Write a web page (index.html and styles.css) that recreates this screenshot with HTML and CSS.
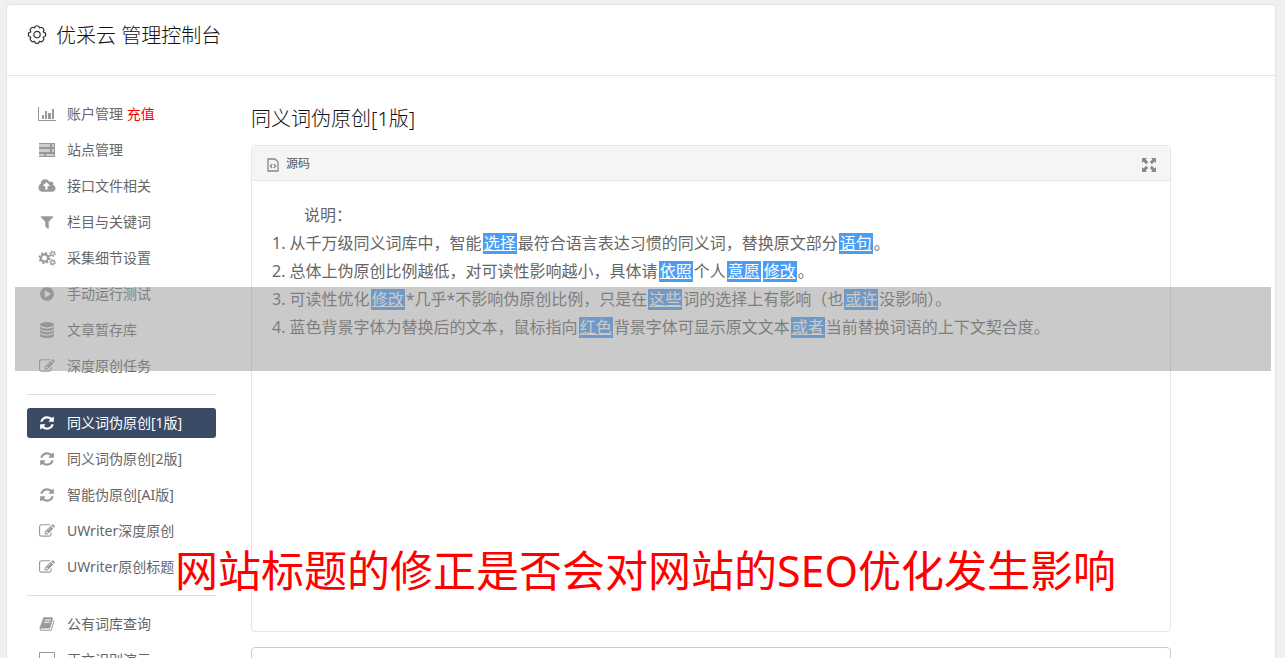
FILE: index.html
```
<!DOCTYPE html>
<html lang="zh-CN">
<head>
    <meta charset="UTF-8">
    <meta name="viewport" content="width=device-width, initial-scale=1.0">
    <title>优采云 管理控制台</title>
    <link rel="stylesheet" href="styles.css">
</head>
<body>
    <!-- Icon set -->
    <svg class="icon-set" aria-hidden="true">
        <symbol id="i-gear" viewBox="0 0 20 20">
            <path fill="none" stroke="currentColor" stroke-width="1.2" stroke-linejoin="round" d="M8.300 1.200Q10 .3 11.700 1.200L12.500 3 14.600 2.300Q16.500 3.200 16.900 5L16.200 7 18.200 7.900Q19.200 9.600 18.200 11.300L16.200 12.200 16.900 14.200Q16.500 16 14.600 16.900L12.500 16.200 11.700 18Q10 18.900 8.300 18L7.500 16.200 5.400 16.900Q3.500 16 3.100 14.200L3.800 12.200 1.800 11.300Q.8 9.600 1.800 7.900L3.800 7 3.100 5Q3.500 3.200 5.400 2.300L7.500 3z"/>
            <circle cx="10" cy="9.600" r="3.200" fill="none" stroke="currentColor" stroke-width="1.200"/>
        </symbol>
        <symbol id="i-chart" viewBox="0 0 18 16">
            <path d="M0 1h1v13h17v1H0zM4 9h2v4H4zM7 5h2v8H7zM10 7h3v6h-3zM14 3h2v10h-2z"/>
        </symbol>
        <symbol id="i-server" viewBox="0 0 18 16">
            <path fill-opacity=".5" d="M1 2h16v3H1zM1 7h16v3H1zM1 12h16v2H1z"/>
            <path d="M1 1h16v1H1zM1 5h16v1H1zM1 6h16v1H1zM1 10h16v1H1zM1 11h16v1H1zM1 14h16v1H1zM12 2h2v3h-2zM16 2h1v3h-1zM12 7h2v3h-2zM16 7h1v3h-1zM6 12h2v2H6zM16 12h1v2h-1z"/>
        </symbol>
        <symbol id="i-cloud" viewBox="0 0 1920 1792">
            <path d="M1280 864q0-14-9-23l-352-352q-9-9-23-9t-23 9l-351 351q-10 12-10 24 0 14 9 23t23 9h224v352q0 13 9.500 22.500t22.500 9.500h192q13 0 22.500-9.500t9.500-22.500v-352h224q13 0 22.500-9.500t9.500-22.500zm640 288q0 159-112.500 271.500t-271.500 112.500h-1088q-185 0-316.500-131.500t-131.500-316.500q0-130 70-240t188-165q-2-30-2-43 0-212 150-362t362-150q156 0 285.500 87t188.500 231q71-62 166-62 106 0 181 75t75 181q0 76-41 138 130 31 213.500 135.500t83.500 238.500z"/>
        </symbol>
        <symbol id="i-filter" viewBox="0 0 1792 1792">
            <path d="M1595 295q17 41-14 70l-493 493v742q0 42-39 59-13 5-25 5-27 0-45-19l-256-256q-19-19-19-45v-486l-493-493q-31-29-14-70 17-39 59-39h1280q42 0 59 39z"/>
        </symbol>
        <symbol id="i-cogs" viewBox="0 0 18 16">
            <g fill="none" stroke="currentColor">
                <circle cx="6.500" cy="8" r="3.600" stroke-width="2.200"/>
                <circle cx="6.500" cy="8" r="5.200" stroke-width="1.600" stroke-dasharray="2.040 2.040"/>
                <circle cx="14.600" cy="3.700" r="1.700" stroke-width="1.200"/>
                <circle cx="14.600" cy="3.700" r="2.700" stroke-width="1.200" stroke-dasharray="1.410 1.410"/>
                <circle cx="14.600" cy="12.400" r="1.700" stroke-width="1.200"/>
                <circle cx="14.600" cy="12.400" r="2.700" stroke-width="1.200" stroke-dasharray="1.410 1.410"/>
            </g>
        </symbol>
        <symbol id="i-play" viewBox="0 0 1792 1792">
            <path d="M896 128q209 0 385.500 103t279.500 279.500 103 385.500-103 385.500-279.500 279.500-385.500 103-385.500-103-279.500-279.500-103-385.500 103-385.500 279.500-279.500 385.500-103zm384 823q32-18 32-55t-32-55l-544-320q-31-19-64-1-32 19-32 56v640q0 37 32 56 16 8 32 8 17 0 32-9z"/>
        </symbol>
        <symbol id="i-database" viewBox="0 0 16 16">
            <ellipse cx="8" cy="2.700" rx="7" ry="2.700"/>
            <path d="M1 4.400q2 2 7 2t7-2v2.100q-1 2.300-7 2.300T1 6.500zM1 8q2 2 7 2t7-2v2.100q-1 2.300-7 2.300T1 10.100zM1 11.600q2 2 7 2t7-2v2.100Q14 16 8 16t-7-2.300z"/>
        </symbol>
        <symbol id="i-edit" viewBox="0 0 1792 1792">
            <path d="M888 1184l116-116-152-152-116 116v56h96v96h56zm440-720q-16-16-33 1l-350 350q-17 17-1 33t33-1l350-350q17-17 1-33zm80 594v190q0 119-84.500 203.500t-203.500 84.500h-832q-119 0-203.500-84.500t-84.500-203.500v-832q0-119 84.500-203.500t203.500-84.500h832q63 0 117 25 15 7 18 23 3 17-9 29l-49 49q-14 14-32 8-23-6-45-6h-832q-66 0-113 47t-47 113v832q0 66 47 113t113 47h832q66 0 113-47t47-113v-126q0-13 9-22l64-64q15-15 35-7t20 29zm-96-738l288 288-672 672h-288v-288zm444 132l-92 92-288-288 92-92q28-28 68-28t68 28l152 152q28 28 28 68t-28 68z"/>
        </symbol>
        <symbol id="i-refresh" viewBox="0 0 1792 1792">
            <path d="M1639 1056q0 5-1 7-64 268-268 434.500t-478 166.500q-146 0-282.500-55t-243.500-157l-129 129q-19 19-45 19t-45-19-19-45v-448q0-26 19-45t45-19h448q26 0 45 19t19 45-19 45l-137 137q71 66 161 102t187 36q134 0 250-65t186-179q11-17 53-117 8-23 30-23h192q13 0 22.500 9.500t9.500 22.500zm25-800v448q0 26-19 45t-45 19h-448q-26 0-45-19t-19-45 19-45l138-138q-148-137-349-137-134 0-250 65t-186 179q-11 17-53 117-8 23-30 23h-199q-13 0-22.500-9.500t-9.500-22.500v-7q65-268 270-434.500t480-166.500q146 0 284 55.500t245 156.500l130-129q19-19 45-19t45 19 19 45z"/>
        </symbol>
        <symbol id="i-book" viewBox="0 0 1792 1792">
            <path d="M1703 478q40 57 18 129l-275 906q-19 64-76.500 107.500t-122.500 43.500h-923q-77 0-148.500-53.500t-99.500-131.500q-24-67-2-127 0-4 3-27t4-37q1-8-3-21.500t-3-19.500q2-11 8-21t16.500-23.500 16.500-23.500q23-38 45-91.500t30-91.500q3-10 .5-30t-.5-28q3-11 17-28t17-23q21-36 42-92t25-90q1-9-2.500-32t.5-28q4-13 22-30.500t22-22.500q19-26 42.500-84.500t27.500-96.500q1-8-3-25.500t-2-26.500q2-8 9-18t18-23 17-21q8-12 16.500-30.500t15-35 16-36 19.500-32 26.500-23.500 36-11.500 47.500 5.500l-1 3q38-9 51-9h761q74 0 114 56t18 130l-274 906q-36 119-71.500 153.500t-128.500 34.500h-869q-27 0-38 15-11 16-1 43 24 70 144 70h923q29 0 56-15.500t35-41.500l300-987q7-22 5-57 38 15 59 43zm-1064 2q-4 13 2 22.500t20 9.500h608q13 0 25.500-9.500t16.500-22.500l21-64q4-13-2-22.500t-20-9.500h-608q-13 0-25.500 9.500t-16.500 22.500zm-83 256q-4 13 2 22.500t20 9.500h608q13 0 25.500-9.500t16.500-22.500l21-64q4-13-2-22.500t-20-9.500h-608q-13 0-25.500 9.500t-16.500 22.500z"/>
        </symbol>
        <symbol id="i-desktop" viewBox="0 0 18 16">
            <path fill-rule="evenodd" d="M2 0h14q1 0 1 1v10q0 1-1 1h-5v2h2v1H5v-1h2v-2H2q-1 0-1-1V1q0-1 1-1zm0 1v10h14V1z"/>
        </symbol>
        <symbol id="i-code" viewBox="0 0 12 14">
            <path fill="none" stroke="currentColor" stroke-width="1.300" d="M1 1h7l3 3v9H1zM5.200 6L3.300 8l1.900 2M6.800 6l1.900 2-1.900 2"/>
        </symbol>
        <symbol id="i-expand" viewBox="0 0 14 14">
            <path d="M0 0h5L3.600 1.500l2.600 2.600-2.100 2.100-2.600-2.600L0 5zM14 0v5l-1.500-1.400-2.600 2.600-2.100-2.100 2.600-2.600L9 0zM0 14V9l1.500 1.400 2.600-2.600 2.100 2.100-2.600 2.600L5 14zM14 14H9l1.400-1.500-2.600-2.600 2.100-2.100 2.600 2.600L14 9z"/>
        </symbol>
    </svg>

    <div class="console">
        <header class="console-header">
            <svg class="gear"><use href="#i-gear"/></svg>
            <h1>优采云 管理控制台</h1>
        </header>

        <div class="console-body">
            <!-- Left menu -->
            <nav class="sidebar">
                <ul class="menu">
                    <li><a href="#"><svg><use href="#i-chart"/></svg><span>账户管理 <span class="recharge">充值</span></span></a></li>
                    <li><a href="#"><svg><use href="#i-server"/></svg>站点管理</a></li>
                    <li><a href="#"><svg><use href="#i-cloud"/></svg>接口文件相关</a></li>
                    <li><a href="#"><svg><use href="#i-filter"/></svg>栏目与关键词</a></li>
                    <li><a href="#"><svg><use href="#i-cogs"/></svg>采集细节设置</a></li>
                    <li><a href="#"><svg><use href="#i-play"/></svg>手动运行测试</a></li>
                    <li><a href="#"><svg><use href="#i-database"/></svg>文章暂存库</a></li>
                    <li><a href="#"><svg><use href="#i-edit"/></svg>深度原创任务</a></li>
                </ul>
                <ul class="menu">
                    <li><a href="#" class="active"><svg><use href="#i-refresh"/></svg>同义词伪原创[1版]</a></li>
                    <li><a href="#"><svg><use href="#i-refresh"/></svg>同义词伪原创[2版]</a></li>
                    <li><a href="#"><svg><use href="#i-refresh"/></svg>智能伪原创[AI版]</a></li>
                    <li><a href="#"><svg><use href="#i-edit"/></svg>UWriter深度原创</a></li>
                    <li><a href="#"><svg><use href="#i-edit"/></svg>UWriter原创标题</a></li>
                </ul>
                <ul class="menu">
                    <li><a href="#"><svg><use href="#i-book"/></svg>公有词库查询</a></li>
                    <li><a href="#"><svg><use href="#i-desktop"/></svg>正文识别演示</a></li>
                </ul>
            </nav>

            <!-- Editor -->
            <main class="content">
                <h2>同义词伪原创[1版]</h2>
                <section class="editor">
                    <div class="toolbar">
                        <button type="button" class="tool"><svg class="code-icon"><use href="#i-code"/></svg>源码</button>
                        <button type="button" class="tool" aria-label="全屏"><svg class="expand-icon"><use href="#i-expand"/></svg></button>
                    </div>
                    <div class="editor-text">
                        <p>说明：</p>
                        <ol>
                            <li>从千万级同义词库中，智能<a href="#">选择</a>最符合语言表达习惯的同义词，替换原文部分<a href="#">语句</a>。</li>
                            <li>总体上伪原创比例越低，对可读性影响越小，具体请<a href="#">依照</a>个人<a href="#">意愿</a><a href="#">修改</a>。</li>
                            <li>可读性优化<a href="#">修改</a>*几乎*不影响伪原创比例，只是在<a href="#">这些</a>词的选择上有影响（也<a href="#">或许</a>没影响）。</li>
                            <li>蓝色背景字体为替换后的文本，鼠标指向<a href="#">红色</a>背景字体可显示原文文本<a href="#">或者</a>当前替换词语的上下文契合度。</li>
                        </ol>
                    </div>
                </section>
                <section class="result"></section>
            </main>
        </div>
    </div>

    <div class="band"></div>
    <div class="caption">网站标题的修正是否会对网站的SEO优化发生影响</div>
</body>
</html>
```
FILE: styles.css
```
* {
    box-sizing: border-box;
}

body {
    position: relative;
    height: 100vh;
    margin: 0;
    padding: 4px 9px 0 6px;
    overflow: hidden;
    background-color: #f0f0f0;
    color: #666;
    font-family: "Noto Sans", "Noto Sans CJK SC", sans-serif;
    font-size: 14px;
}

a {
    color: inherit;
    text-decoration: none;
}

svg {
    flex: none;
    fill: currentColor;
}

.icon-set {
    display: none;
}

.console {
    background-color: #fff;
    border: 1px solid #e5e5e5;
    border-radius: 4px 4px 0 0;
    box-shadow: 0 0 1px #ddd;
}

/* Header */
.console-header {
    display: flex;
    align-items: flex-start;
    gap: 9px;
    height: 71px;
    padding: 16px 20px;
    border-bottom: 1px solid #e5e5e5;
    color: #333;
}

.gear {
    width: 20px;
    height: 20px;
    margin-top: 4px;
}

h1,
h2 {
    margin: 0;
    color: #111;
    font-size: 20px;
    font-weight: 300;
    line-height: 30px;
}

.console-body {
    display: flex;
    gap: 35px;
    padding: 23px 20px;
}

/* Left menu */
.sidebar {
    flex: none;
    width: 189px;
}

.menu {
    display: flex;
    flex-direction: column;
    gap: 6px;
    margin: 0;
    padding: 0;
    list-style: none;
}

.menu + .menu {
    margin-top: 13px;
    padding-top: 13px;
    border-top: 1px solid #ddd;
}

.menu a {
    display: flex;
    align-items: center;
    gap: 11px;
    height: 30px;
    padding: 0 11px 2px;
    border-radius: 3px;
    white-space: nowrap;
}

.menu svg {
    width: 18px;
    height: 16px;
    margin-top: 2px;
    color: #999;
}

.menu .active,
.menu .active svg {
    color: #fff;
}

.menu .active {
    background-color: #3b4b66;
}

.recharge {
    color: #f00;
}

/* Editor */
.content {
    flex: 1;
    max-width: 920px;
}

h2 {
    padding: 5px 0 11px;
}

.editor {
    height: 487px;
    border: 1px solid #e5e5e5;
    border-radius: 4px;
}

.toolbar {
    display: flex;
    align-items: center;
    justify-content: space-between;
    height: 35px;
    padding: 0 14px 0 15px;
    border-bottom: 1px solid #e5e5e5;
    background-color: #f5f5f5;
}

.tool {
    display: flex;
    align-items: center;
    gap: 7px;
    padding: 0;
    border: none;
    background: none;
    color: #555;
    font-family: inherit;
    font-size: 12px;
}

.tool svg {
    height: 14px;
    margin-top: 3px;
    color: #888;
}

.code-icon {
    width: 12px;
}

.expand-icon {
    width: 14px;
}

.editor-text {
    padding: 20px;
    font-size: 16px;
    line-height: 28px;
}

.editor-text p {
    margin: 0;
    text-indent: 2em;
}

.editor-text ol {
    margin: 0;
    padding: 0;
    list-style-position: inside;
}

.editor-text a {
    display: inline-block;
    margin: 0 1px;
    padding: 0 1px;
    background-color: #4a9df5;
    color: #fff;
    line-height: 21px;
    text-decoration: underline;
}

.result {
    height: 100px;
    margin-top: 15px;
    border: 1px solid #ccc;
    border-radius: 4px;
}

/* Caption and band over the page */
.band {
    position: absolute;
    top: 287px;
    right: 14px;
    left: 15px;
    height: 84px;
    background-color: rgba(150, 150, 150, 0.5);
}

.caption {
    position: absolute;
    top: 541px;
    left: 175px;
    color: #f00;
    font-size: 43px;
    line-height: 60px;
    white-space: nowrap;
}
```
